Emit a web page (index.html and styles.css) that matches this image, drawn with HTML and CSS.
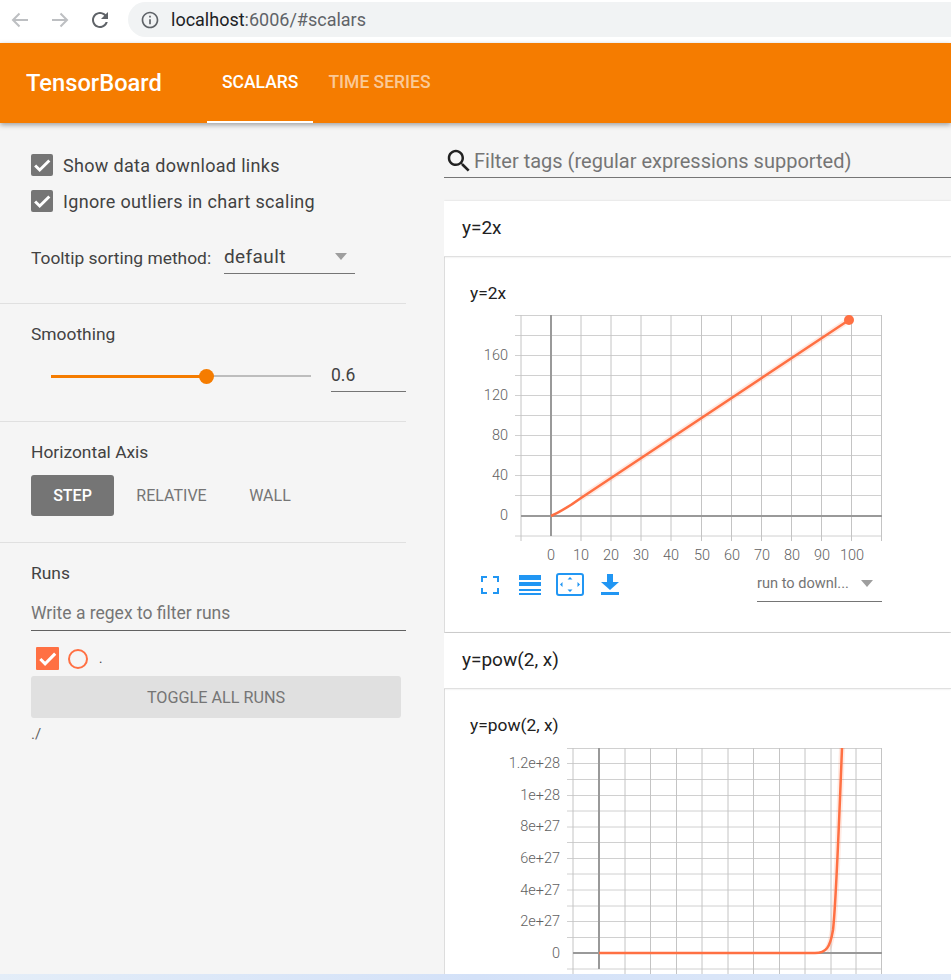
FILE: index.html
```html
<!DOCTYPE html>
<html lang="en">
<head>
    <meta charset="UTF-8">
    <meta name="viewport" content="width=device-width, initial-scale=1.0">
    <title>TensorBoard</title>
    <link rel="stylesheet" href="styles.css">
</head>
<body>
    <div class="browser-bar">
        <div class="nav-btn"><svg width="24" height="24" viewBox="0 0 24 24"><path class="nav-arrow" d="M20 12H5M11.5 5.5 5 12l6.5 6.5"/></svg></div>
        <div class="nav-btn"><svg width="24" height="24" viewBox="0 0 24 24"><path class="nav-arrow" d="M4 12h15M12.5 5.5 19 12l-6.5 6.5"/></svg></div>
        <div class="nav-btn"><svg width="24" height="24" viewBox="0 0 24 24"><path fill="#5f6368" d="M17.65 6.35C16.2 4.9 14.21 4 12 4c-4.42 0-7.99 3.58-7.99 8s3.57 8 7.99 8c3.73 0 6.84-2.55 7.73-6h-2.08c-.82 2.33-3.04 4-5.65 4-3.31 0-6-2.69-6-6s2.69-6 6-6c1.66 0 3.14.69 4.22 1.78L13 11h7V4l-2.35 2.35z"/></svg></div>
        <div class="omnibox">
            <svg width="20" height="20" viewBox="0 0 24 24"><path fill="#5f6368" d="M11 7h2v2h-2zm0 4h2v6h-2zm1-9C6.48 2 2 6.48 2 12s4.48 10 10 10 10-4.48 10-10S17.52 2 12 2zm0 18c-4.41 0-8-3.59-8-8s3.59-8 8-8 8 3.59 8 8-3.59 8-8 8z"/></svg>
            <span class="url"><span class="url-host">localhost</span>:6006/#scalars</span>
        </div>
    </div>

    <div class="toolbar">
        <div class="brand">TensorBoard</div>
        <div class="tab tab-active">SCALARS</div>
        <div class="tab">TIME SERIES</div>
    </div>

    <div class="page">
        <div class="sidebar">
            <div class="section section-options">
                <div class="check-row"><span class="checkbox"><svg width="22" height="22" viewBox="0 0 24 24"><path class="check-mark" d="M4.500 12.500l5 5L20 7"/></svg></span>Show data download links</div>
                <div class="check-row"><span class="checkbox"><svg width="22" height="22" viewBox="0 0 24 24"><path class="check-mark" d="M4.500 12.500l5 5L20 7"/></svg></span>Ignore outliers in chart scaling</div>
                <div class="tooltip-row">
                    <span class="tooltip-label">Tooltip sorting method:</span>
                    <div class="dropdown"><span>default</span><span class="caret"></span></div>
                </div>
            </div>
            <div class="section">
                <div class="section-title">Smoothing</div>
                <div class="slider-row">
                    <div class="slider">
                        <div class="slider-fill"></div>
                        <div class="slider-thumb"></div>
                    </div>
                    <div class="slider-value">0.6</div>
                </div>
            </div>
            <div class="section section-axis">
                <div class="section-title">Horizontal Axis</div>
                <div class="axis-buttons">
                    <div class="axis-btn axis-btn-active">STEP</div>
                    <div class="axis-btn">RELATIVE</div>
                    <div class="axis-btn">WALL</div>
                </div>
            </div>
            <div class="section section-runs">
                <div class="section-title">Runs</div>
                <div class="regex-input">Write a regex to filter runs</div>
                <div class="run-row">
                    <span class="run-check"><svg width="23" height="23" viewBox="0 0 24 24"><path class="check-mark" d="M4.500 12.500l5 5L20 7"/></svg></span>
                    <span class="run-dot"></span>
                    <span class="run-name">.</span>
                </div>
                <div class="toggle-btn">TOGGLE ALL RUNS</div>
                <div class="run-path">./</div>
            </div>
        </div>

        <div class="main">
            <div class="filter">
                <svg width="30" height="30" viewBox="0 0 24 24"><path fill="#212121" d="M15.5 14h-.79l-.28-.27C15.41 12.59 16 11.11 16 9.5 16 5.91 13.09 3 9.5 3S3 5.91 3 9.5 5.91 16 9.5 16c1.61 0 3.09-.59 4.23-1.57l.27.28v.79l5 4.99L20.49 19l-4.99-5zm-6 0C7.01 14 5 11.99 5 9.5S7.01 5 9.5 5 14 7.01 14 9.5 11.99 14 9.5 14z"/></svg>
                <span>Filter tags (regular expressions supported)</span>
            </div>

            <div class="card-header card-first">y=2x</div>
            <div class="card-body">
                <div class="chart-title">y=2x</div>
                <svg class="chart chart-line" width="506" height="255" viewBox="445 310 506 255">
                    <path class="grid" d="M515 315.5H882M515 335.5H882M515 355.5H882M515 375.5H882M515 395.5H882M515 415.5H882M515 435.5H882M515 455.5H882M515 475.5H882M515 495.5H882M515 536H882"/>
                    <path class="grid grid-v" d="M521 315V541M581 315V541M611 315V541M641 315V541M671 315V541M701.500 315V541M731.500 315V541M761.500 315V541M791.500 315V541M821.500 315V541M851.500 315V541M881.500 315V541"/>
                    <path class="axis" d="M551 315V536M521 516H882"/>
                    <path class="band" d="M581 498L849 320"/>
                    <path class="curve" d="M551 516Q566 509 581 498L849 320"/>
                    <circle class="dot" cx="849" cy="320" r="5"/>
                    <g class="y-labels">
                        <text x="508" y="360">160</text>
                        <text x="508" y="400">120</text>
                        <text x="508" y="440">80</text>
                        <text x="508" y="480">40</text>
                        <text x="508" y="520">0</text>
                    </g>
                    <g class="x-labels">
                        <text x="551" y="560">0</text>
                        <text x="581" y="560">10</text>
                        <text x="611" y="560">20</text>
                        <text x="641" y="560">30</text>
                        <text x="671" y="560">40</text>
                        <text x="702" y="560">50</text>
                        <text x="732" y="560">60</text>
                        <text x="762" y="560">70</text>
                        <text x="792" y="560">80</text>
                        <text x="822" y="560">90</text>
                        <text x="852" y="560">100</text>
                    </g>
                </svg>
                <div class="chart-controls">
                    <div class="icon-btn"><svg width="20" height="20" viewBox="0 0 20 20"><path class="icon-stroke" d="M2 7V2H7M13 2H18V7M18 13V18H13M7 18H2V13"/></svg></div>
                    <div class="icon-btn"><svg width="24" height="22" viewBox="0 0 24 22"><path class="icon-fill" d="M1 1H23V6H1zM1 8H23V12H1zM1 15H23V17H1zM1 19H23V21H1z"/></svg></div>
                    <div class="icon-btn"><svg width="30" height="25" viewBox="0 0 30 25"><rect class="icon-stroke" x="2" y="2" width="26" height="21" rx="2"/><path class="icon-fill" d="M15 5l2.500 2.500h-5zM15 20l2.500-2.500h-5zM5 12.500l2.500-2.500v5zM25 12.500l-2.500-2.500v5z"/></svg></div>
                    <div class="icon-btn"><svg width="20" height="24" viewBox="0 0 20 24"><path class="icon-fill" d="M7 1H13V9H19L10 17 1 9H7zM1 19H19V22H1z"/></svg></div>
                    <div class="download-select"><span>run to downl...</span><span class="caret"></span></div>
                </div>
            </div>

            <div class="card-header">y=pow(2, x)</div>
            <div class="card-body">
                <div class="chart-title">y=pow(2, x)</div>
                <svg class="chart chart-pow" width="506" height="240" viewBox="445 742 506 240">
                    <path class="grid" d="M567 748.500H882M567 763.500H882M567 779.500H882M567 795.500H882M567 811H882M567 827H882M567 842.500H882M567 858.500H882M567 874H882M567 890H882M567 906H882M567 921.500H882M567 937.500H882M567 969H882"/>
                    <path class="grid grid-v" d="M573 748V974M625 748V974M650.500 748V974M676.500 748V974M702 748V974M728 748V974M753.500 748V974M779.500 748V974M805 748V974M831 748V974M856 748V974M881.500 748V974"/>
                    <path class="axis" d="M599 748V969M573 953H882"/>
                    <path class="band" d="M826 950C830 948 831 940 833 930C836 905 838 850 842 748"/>
                    <path class="curve" d="M599 953H815C826 953 830 948 833 930C836 905 838 850 842 748"/>
                    <g class="y-labels">
                        <text x="560" y="768">1.2e+28</text>
                        <text x="560" y="800">1e+28</text>
                        <text x="560" y="831">8e+27</text>
                        <text x="560" y="863">6e+27</text>
                        <text x="560" y="895">4e+27</text>
                        <text x="560" y="926">2e+27</text>
                        <text x="560" y="958">0</text>
                    </g>
                </svg>
            </div>
        </div>
    </div>

    <div class="desktop-strip"></div>
</body>
</html>
```

FILE: styles.css
```css
* {
    box-sizing: border-box;
}
body {
    margin: 0;
    height: 980px;
    display: flex;
    flex-direction: column;
    overflow: hidden;
    font-family: Roboto, "Liberation Sans", sans-serif;
    color: #212121;
    background-color: #f5f5f5;
}

/* browser chrome */
.browser-bar {
    height: 43px;
    flex: none;
    display: flex;
    align-items: flex-start;
    background: #fff;
}
.nav-btn {
    width: 40px;
    height: 39px;
    display: flex;
    align-items: center;
    justify-content: center;
}
.nav-arrow {
    fill: none;
    stroke: #bdbfc2;
    stroke-width: 2;
}
.omnibox {
    flex: 1;
    height: 35px;
    margin: 2px 0 0 8px;
    padding-left: 12px;
    display: flex;
    align-items: center;
    gap: 11px;
    background: #f1f3f4;
    border-radius: 18px 0 0 18px;
}
.url {
    font-size: 18px;
    color: #5f6368;
}
.url-host {
    color: #202124;
}

/* orange top bar */
.toolbar {
    height: 80px;
    flex: none;
    display: flex;
    align-items: center;
    background-color: #f57c00;
    color: #fff;
    box-shadow: 0 2px 5px rgba(0, 0, 0, 0.35);
    position: relative;
    z-index: 1;
}
.brand {
    width: 207px;
    padding-left: 26px;
    font-size: 23.7px;
    font-weight: 500;
}
.tab {
    height: 80px;
    padding: 0 15px;
    display: flex;
    align-items: center;
    font-size: 17.5px;
    font-weight: 500;
    color: rgba(255, 255, 255, 0.6);
    border-bottom: 2px solid transparent;
}
.tab-active {
    color: #fff;
    border-bottom-color: #fff;
}

.page {
    flex: 1;
    min-height: 0;
    display: flex;
}

/* left column */
.sidebar {
    width: 444px;
    flex: none;
    padding-right: 38px;
}
.section {
    padding: 19px 0 29px 31px;
    border-bottom: 1px solid #e0e0e0;
}
.section-options {
    padding-top: 24px;
}
.section-axis {
    padding-bottom: 26px;
}
.section-runs {
    border-bottom: none;
}
.section-title {
    height: 22px;
    line-height: 22px;
    font-size: 17.4px;
    color: #424242;
}
.check-row {
    height: 36px;
    display: flex;
    align-items: center;
    font-size: 18px;
    letter-spacing: 0.33px;
    color: #424242;
}
.checkbox {
    width: 22px;
    height: 22px;
    margin-right: 10px;
    background-color: #757575;
    border-radius: 2px;
}
.checkbox svg,
.run-check svg {
    display: block;
}
.check-mark {
    fill: none;
    stroke: #fff;
    stroke-width: 3.2;
}
.tooltip-row {
    margin-top: 22px;
    display: flex;
    align-items: center;
}
.tooltip-label {
    width: 193px;
    font-size: 17.4px;
    color: #424242;
}
.dropdown {
    width: 131px;
    height: 33px;
    padding-bottom: 2px;
    display: flex;
    align-items: center;
    justify-content: space-between;
    padding-right: 8px;
    font-size: 19px;
    letter-spacing: 0.4px;
    color: #424242;
    border-bottom: 1px solid #757575;
}
.caret {
    width: 0;
    height: 0;
    border-left: 6.5px solid transparent;
    border-right: 6.5px solid transparent;
    border-top: 7px solid #9e9e9e;
}

.slider-row {
    margin-top: 12px;
    height: 35px;
    display: flex;
    align-items: center;
}
.slider {
    width: 260px;
    height: 2px;
    margin: 3px 20px 0 20px;
    background: #bdbdbd;
    position: relative;
}
.slider-fill {
    width: 60%;
    height: 3px;
    background: #f57c00;
}
.slider-thumb {
    position: absolute;
    left: 148px;
    top: -6.5px;
    width: 15px;
    height: 15px;
    border-radius: 50%;
    background: #f57c00;
}
.slider-value {
    width: 75px;
    height: 35px;
    line-height: 36px;
    font-size: 17.5px;
    color: #424242;
    border-bottom: 1px solid #757575;
}

.axis-buttons {
    margin-top: 12px;
    display: flex;
}
.axis-btn {
    height: 41px;
    line-height: 41px;
    text-align: center;
    font-size: 16px;
    color: #757575;
    width: 115px;
}
.axis-btn:last-child {
    width: 82px;
}
.axis-btn-active {
    width: 83px;
    background-color: #757575;
    color: #fff;
    font-weight: 500;
    border-radius: 3px;
}

.regex-input {
    margin-top: 12px;
    height: 35px;
    line-height: 35px;
    font-size: 17.5px;
    color: #757575;
    border-bottom: 1px solid #616161;
}
.run-row {
    margin-top: 16px;
    padding-left: 5px;
    height: 23px;
    display: flex;
    align-items: center;
}
.run-check {
    width: 23px;
    height: 23px;
    background-color: #ff7043;
    border-radius: 1px;
}
.run-dot {
    width: 20px;
    height: 20px;
    margin-left: 9px;
    border: 2px solid #ff7043;
    border-radius: 50%;
}
.run-name {
    margin-left: 11px;
    font-size: 13px;
    color: #424242;
}
.toggle-btn {
    margin-top: 6px;
    width: 370px;
    height: 42px;
    line-height: 43px;
    text-align: center;
    font-size: 16.2px;
    color: #757575;
    background-color: #e0e0e0;
    border-radius: 3px;
}
.run-path {
    margin-top: 7px;
    height: 18px;
    line-height: 18px;
    font-size: 15px;
    color: #616161;
}

/* right column */
.main {
    flex: 1;
    min-width: 0;
    overflow: hidden;
}
.filter {
    margin-top: 20px;
    height: 35px;
    padding-top: 2px;
    display: flex;
    align-items: center;
    font-size: 20px;
    color: #757575;
    border-bottom: 1px solid #757575;
}
.filter svg {
    flex: none;
}
.card-header {
    height: 56px;
    line-height: 54px;
    padding-left: 18px;
    font-size: 19px;
    color: #212121;
    background: #fff;
    box-shadow: 0 0 2px rgba(0, 0, 0, 0.12);
    border-bottom: 1px solid #e0e0e0;
    position: relative;
}
.card-first {
    margin-top: 23px;
}
.card-body {
    height: 375px;
    background: #fff;
    border-left: 1px solid #ddd;
    box-shadow: 0 1px 2px rgba(0, 0, 0, 0.2);
    margin-bottom: 1px;
}
.chart-title {
    height: 53px;
    padding: 25px 0 0 25px;
    font-size: 17.4px;
    line-height: 22px;
    color: #212121;
}
.chart {
    display: block;
}
.grid {
    fill: none;
    stroke: #d0d0d0;
    stroke-width: 1;
}
.grid-v {
    stroke: #c4c4c4;
}
.axis {
    fill: none;
    stroke: #999;
    stroke-width: 2;
}
.curve {
    fill: none;
    stroke: #ff7043;
    stroke-width: 2.5;
}
.band {
    fill: none;
    stroke: #ff7043;
    stroke-width: 6;
    opacity: 0.15;
}
.dot {
    fill: #ff7043;
}
.y-labels text,
.x-labels text {
    font-family: Roboto, "Liberation Sans", sans-serif;
    font-size: 14.5px;
    font-weight: 300;
    fill: #616161;
}
.y-labels text {
    text-anchor: end;
}
.x-labels text {
    text-anchor: middle;
}
.chart-controls {
    height: 37px;
    padding: 0 69px 0 25px;
    display: flex;
    align-items: center;
}
.icon-btn {
    width: 40px;
    height: 30px;
    margin-top: 2px;
    display: flex;
    align-items: center;
    justify-content: center;
}
.icon-stroke {
    fill: none;
    stroke: #2196f3;
    stroke-width: 2;
}
.icon-fill {
    fill: #2196f3;
}
.download-select {
    margin-left: auto;
    width: 125px;
    height: 37px;
    display: flex;
    align-items: center;
    justify-content: space-between;
    padding-right: 9px;
    font-size: 14.6px;
    color: #757575;
    border-bottom: 1px solid #757575;
}

.desktop-strip {
    height: 6px;
    flex: none;
    background: linear-gradient(90deg, #e3edf8, #d3e1f8 50%, #dfe9f8);
    position: relative;
}
```
